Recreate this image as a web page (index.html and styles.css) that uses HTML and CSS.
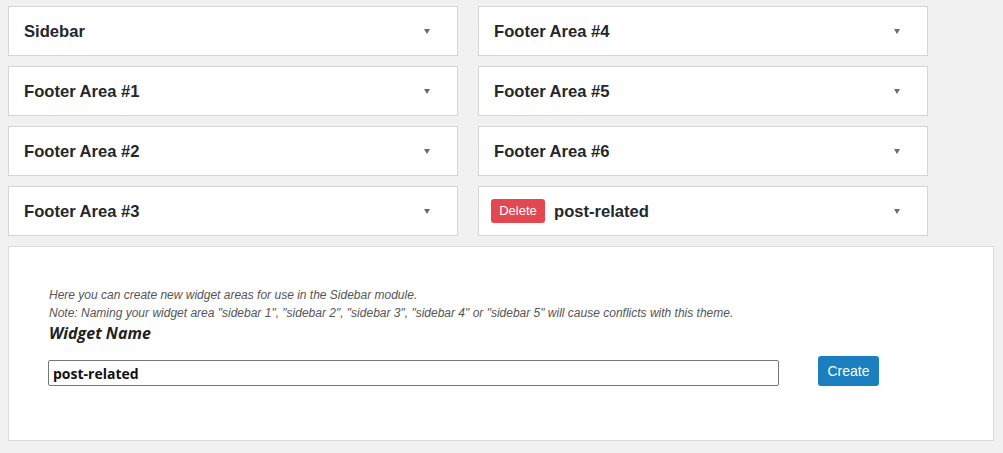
FILE: index.html
```html
<!DOCTYPE html>
<html>
<head>
<meta charset="utf-8">
<link rel="stylesheet" href="styles.css">
</head>
<body>
<div class="page">
  <div class="areas">
    <div class="area"><span class="area-title">Sidebar</span><span class="arrow"></span></div>
    <div class="area"><span class="area-title">Footer Area #4</span><span class="arrow"></span></div>
    <div class="area"><span class="area-title">Footer Area #1</span><span class="arrow"></span></div>
    <div class="area"><span class="area-title">Footer Area #5</span><span class="arrow"></span></div>
    <div class="area"><span class="area-title">Footer Area #2</span><span class="arrow"></span></div>
    <div class="area"><span class="area-title">Footer Area #6</span><span class="arrow"></span></div>
    <div class="area"><span class="area-title">Footer Area #3</span><span class="arrow"></span></div>
    <div class="area area-custom"><span class="delete">Delete</span><span class="area-title">post-related</span><span class="arrow"></span></div>
  </div>
  <div class="panel">
    <p class="note">Here you can create new widget areas for use in the Sidebar module.</p>
    <p class="note">Note: Naming your widget area "sidebar 1", "sidebar 2", "sidebar 3", "sidebar 4" or "sidebar 5" will cause conflicts with this theme.</p>
    <div class="label">Widget Name</div>
    <div class="form-row">
      <input class="name-input" type="text" value="post-related">
      <button class="create">Create</button>
    </div>
  </div>
</div>
</body>
</html>
```
FILE: styles.css
```css
html, body {
  margin: 0;
  padding: 0;
  background: #f1f1f1;
}
.page {
  padding: 6px 0 0 8px;
  font-family: "Liberation Sans", Arial, sans-serif;
}
.areas {
  display: grid;
  grid-template-columns: 450px 450px;
  grid-auto-rows: 50px;
  column-gap: 20px;
  row-gap: 10px;
}
.area {
  box-sizing: border-box;
  background: #fff;
  border: 1px solid #d5d5d5;
  display: flex;
  align-items: center;
  padding: 1px 27px 0 15px;
}
.area-title {
  font-size: 16.6px;
  font-weight: bold;
  color: #23282d;
  flex: 1;
}
.arrow {
  width: 0;
  height: 0;
  border-left: 3.5px solid transparent;
  border-right: 3.5px solid transparent;
  border-top: 5px solid #6b6b6b;
}
.area-custom {
  padding-left: 12px;
}
.delete {
  background: #e2484f;
  color: #fff;
  font-size: 13px;
  height: 24px;
  line-height: 24px;
  width: 54px;
  text-align: center;
  border-radius: 3px;
  margin-right: 9px;
  margin-top: -1px;
  flex: none;
}
.panel {
  box-sizing: border-box;
  margin-top: 10px;
  width: 986px;
  height: 195px;
  background: #fff;
  border: 1px solid #dcdcdc;
  padding: 39px 0 0 40px;
}
.note {
  margin: 0;
  font-size: 12px;
  line-height: 18px;
  font-style: italic;
  color: #555;
}
.label {
  font-family: "Open Sans", sans-serif;
  font-weight: bold;
  font-style: italic;
  font-size: 16px;
  line-height: 22px;
  color: #222;
  margin-top: 0;
}
.form-row {
  display: flex;
  align-items: flex-end;
  margin-top: 12px;
}
.name-input {
  box-sizing: border-box;
  width: 731px;
  height: 26px;
  margin: 0 0 0 -1px;
  border: 1px solid #777;
  border-radius: 2px;
  padding: 0 4px;
  font-family: "Open Sans", sans-serif;
  font-weight: bold;
  font-size: 14px;
  color: #111;
  background: #fff;
}
.create {
  margin-left: 39px;
  width: 61px;
  height: 30px;
  border: 0;
  border-radius: 3px;
  background: #1b7fbf;
  color: #fff;
  font-family: "Liberation Sans", Arial, sans-serif;
  font-size: 14px;
  padding: 0;
}
```
